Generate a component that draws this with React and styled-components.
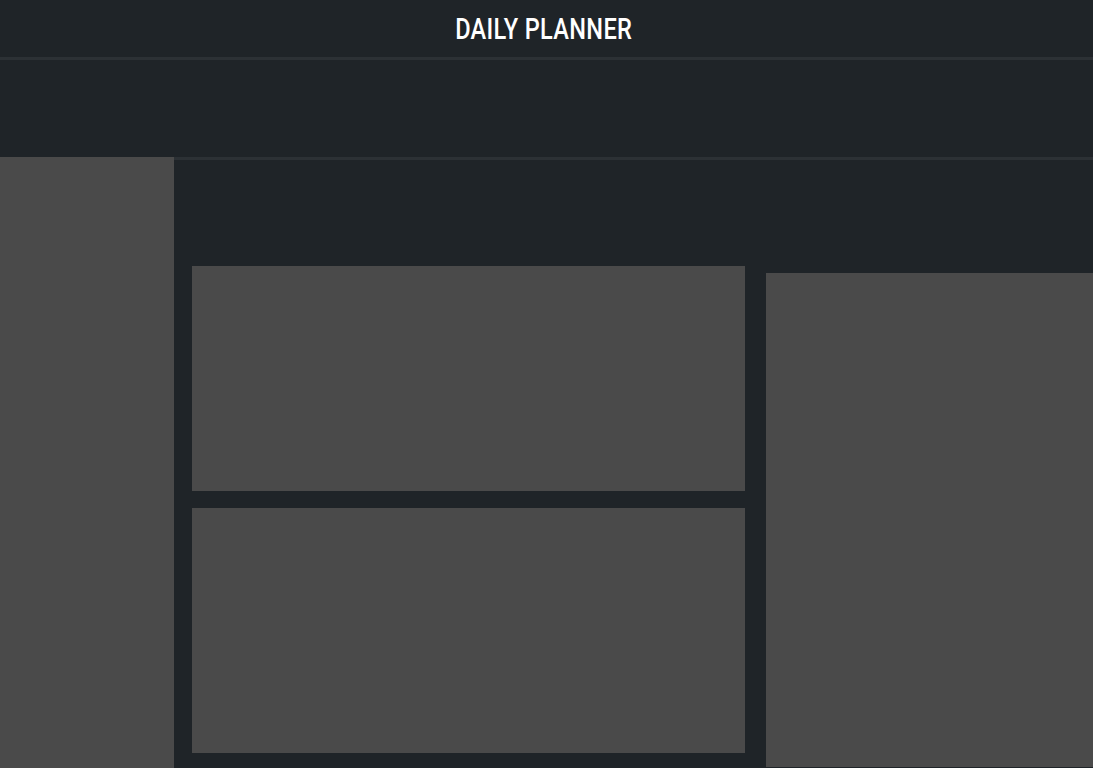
import styled, { createGlobalStyle } from "styled-components";

const GlobalStyle = createGlobalStyle`
  html, body {
    margin: 0;
    padding: 0;
    background: #1f2428;
    overflow: hidden;
  }
  * {
    box-sizing: border-box;
  }
`;

const Page = styled.div`
  display: flex;
  flex-direction: column;
  height: 768px;
  background: #1f2428;
`;

const Header = styled.header`
  height: 60px;
  display: flex;
  align-items: center;
  justify-content: center;
  border-bottom: 3px solid #2c3135;
  padding: 3px 6px 0 0;
`;

const Title = styled.h1`
  margin: 0;
  font-family: Roboto, "DejaVu Sans", sans-serif;
  font-weight: 500;
  font-size: 29.5px;
  line-height: 1;
  letter-spacing: 0.4px;
  color: #ffffff;
  transform: scaleX(0.8);
`;

const Band = styled.div`
  height: 97px;
`;

const Body = styled.div`
  flex: 1;
  display: flex;
  min-height: 0;
`;

const Sidebar = styled.aside`
  width: 174px;
  flex-shrink: 0;
  background: #4a4a4a;
`;

const Main = styled.main`
  flex: 1;
  border-top: 3px solid #2c3135;
  padding: 106px 0 0 18px;
  display: grid;
  grid-template-columns: 553px 1fr;
  column-gap: 21px;
  align-items: start;
`;

const Column = styled.div`
  display: flex;
  flex-direction: column;
  gap: 17px;
`;

const Panel = styled.section`
  background: #4a4a4a;
  height: ${(p) => p.$h}px;
  margin-top: ${(p) => p.$top || 0}px;
`;

export default function App() {
  return (
    <>
      <GlobalStyle />
      <Page>
        <Header>
          <Title>DAILY PLANNER</Title>
        </Header>
        <Band />
        <Body>
          <Sidebar />
          <Main>
            <Column>
              <Panel $h={225} />
              <Panel $h={245} />
            </Column>
            <Panel $h={494} $top={7} />
          </Main>
        </Body>
      </Page>
    </>
  );
}
